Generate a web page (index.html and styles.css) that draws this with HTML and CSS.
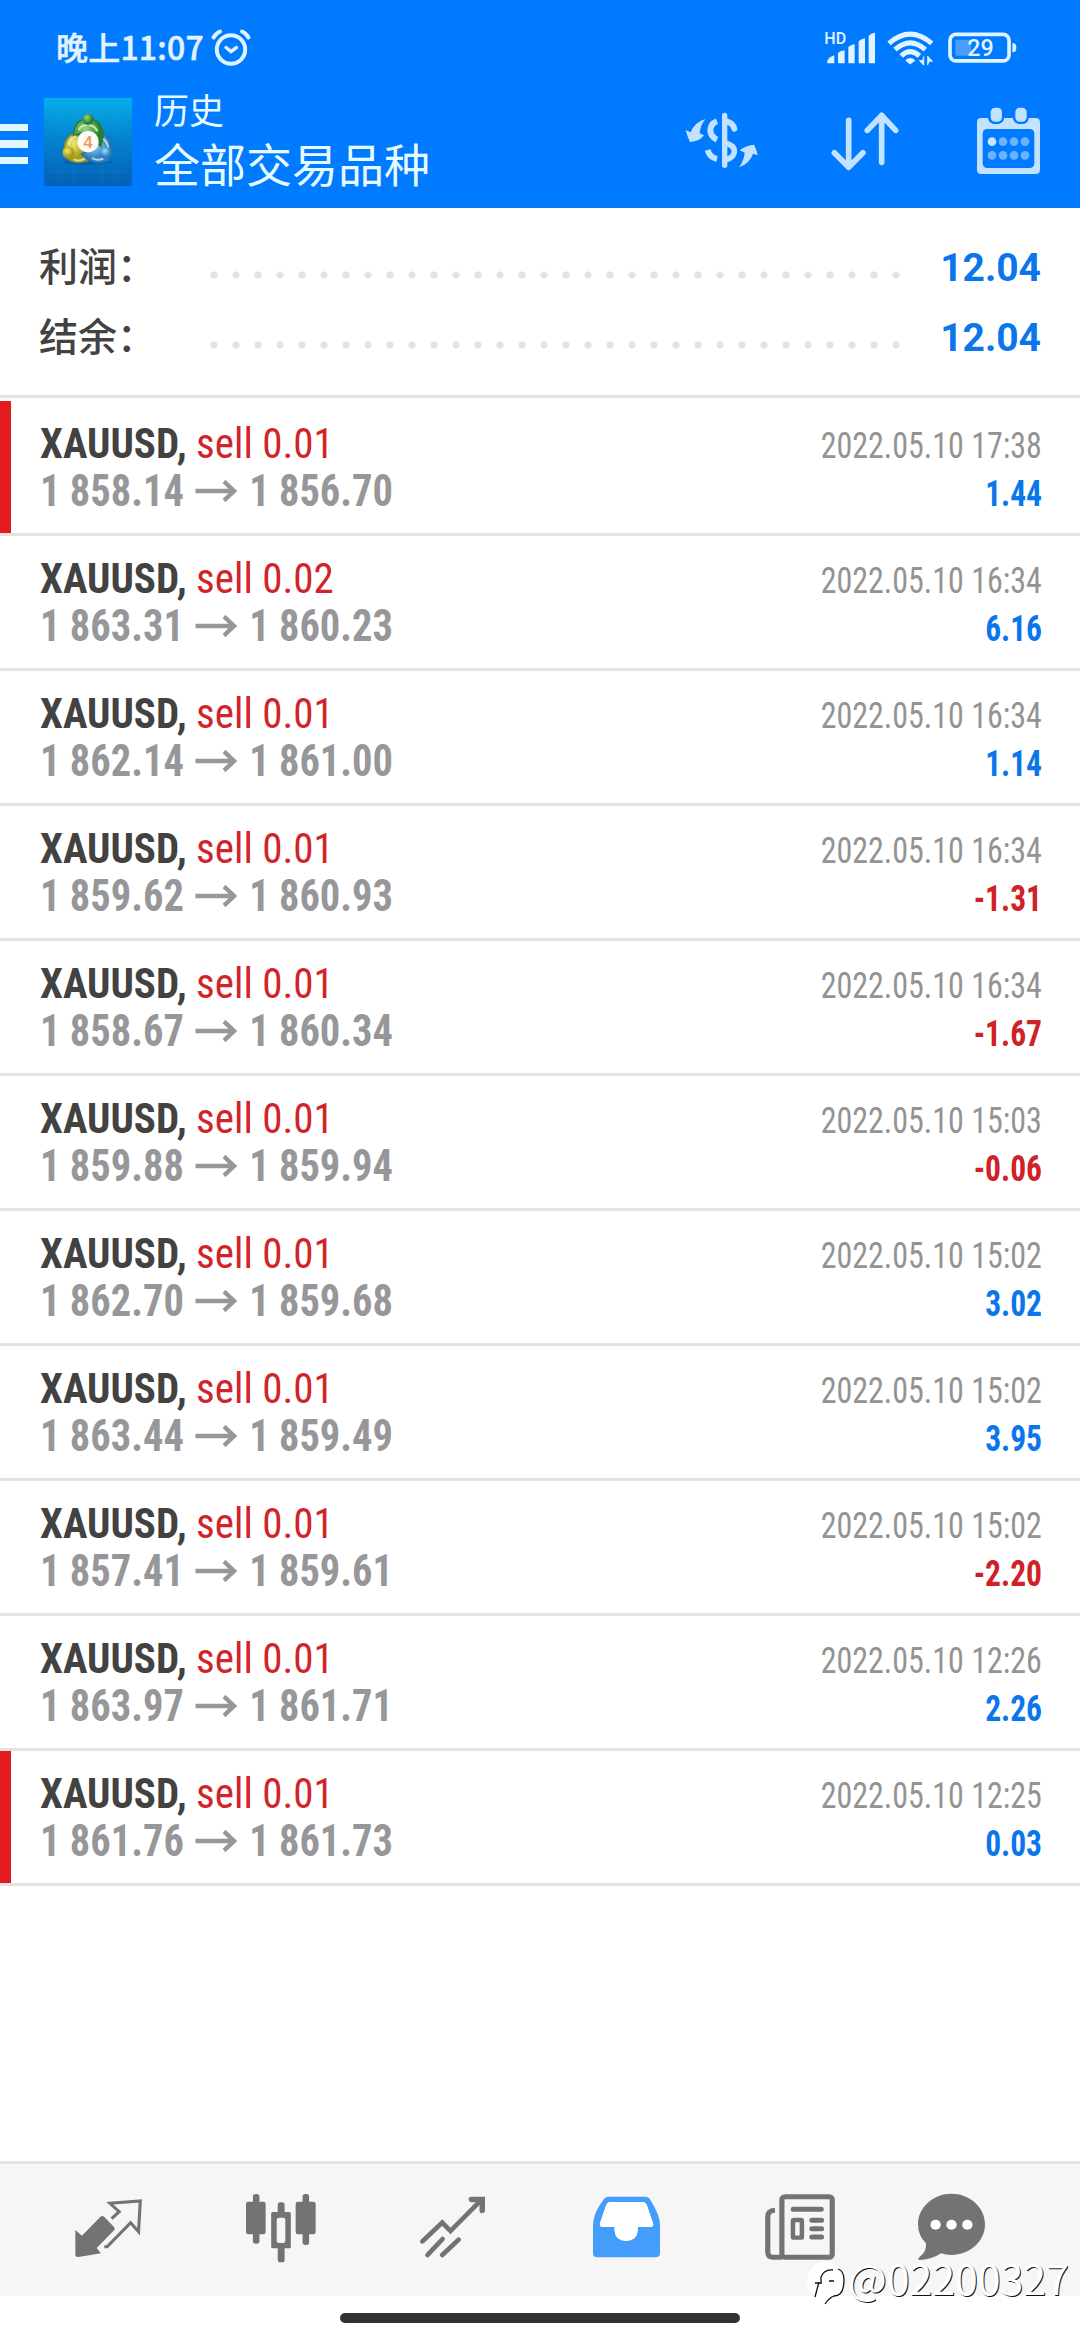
FILE: index.html
```html
<!DOCTYPE html>
<html lang="zh-CN">
<head>
<meta charset="utf-8">
<title>历史</title>
<link rel="stylesheet" href="styles.css">
</head>
<body>
<div class="screen">
  <header class="top">
    <div class="status">
      <div class="status-left">
        <span class="clock">晚上11:07</span>
        <svg class="alarm" viewBox="0 0 40 38"><g fill="none" stroke="#e0f3ff" stroke-linecap="round"><circle cx="20" cy="20.5" r="14.2" stroke-width="4"/><path d="M2.5 8.5Q4.500 4.500 9 2.500M37.500 8.500Q35.500 4.500 31 2.500" stroke-width="4"/><path d="M15 18.500L20 22.500L25.500 18.500" stroke-width="3.500"/></g></svg>
      </div>
      <div class="status-right">
        <svg class="signal" viewBox="555 85 150 114"><text x="553" y="129" class="hd">HD</text><g fill="#e0f3ff"><path d="M562 188V182Q564 170 583 164V188Z"/><path d="M594 188V157Q602 149 614 149V188Z"/><path d="M625 188V139Q633 132 644 131V188Z"/><path d="M656 188V122Q664 114 675 113V188Z"/><path d="M686 188V105Q694 98 705 96V188Z"/></g></svg>
        <svg class="wifi" viewBox="742 85 142 114"><g fill="none" stroke="#e0f3ff" stroke-width="15"><path d="M748 128Q812 72 877 128"/><path d="M766 147Q812 106 858 147"/><path d="M785 166Q812 140 840 166"/></g><path d="M797 180Q812 165 828 180L812 192Z" fill="#e0f3ff"/><path d="M853 167V194L840 180H848M865 194V167L879 182H871" fill="#e0f3ff" stroke="#e0f3ff" stroke-width="3"/></svg>
        <svg class="battery" viewBox="925 85 208 114"><rect x="931" y="101" width="178" height="80" rx="18" fill="none" stroke="#e0f3ff" stroke-width="11"/><rect x="947" y="117" width="48" height="48" rx="6" fill="#4a9dfa"/><path d="M1119 128Q1131 126 1131 141T1119 155Z" fill="#e0f3ff"/><text x="1023" y="166" text-anchor="middle" class="pct">29</text></svg>
      </div>
    </div>
    <div class="appbar">
      <div class="menu"><i></i><i></i><i></i></div>
      <svg class="logo" viewBox="0 0 264 264">
        <defs>
          <linearGradient id="bg" x1="0" y1="0" x2="0" y2="1"><stop offset="0" stop-color="#06aee8"/><stop offset=".5" stop-color="#047fcd"/><stop offset="1" stop-color="#0361b5"/></linearGradient>
          <radialGradient id="gr" cx=".4" cy=".35"><stop offset="0" stop-color="#9bd68a"/><stop offset="1" stop-color="#257f2c"/></radialGradient>
          <radialGradient id="ye" cx=".4" cy=".35"><stop offset="0" stop-color="#f5e96a"/><stop offset="1" stop-color="#a59a1b"/></radialGradient>
          <radialGradient id="bl" cx=".4" cy=".35"><stop offset="0" stop-color="#a9dcfb"/><stop offset="1" stop-color="#2a80c6"/></radialGradient>
        </defs>
        <rect width="264" height="264" fill="url(#bg)"/>
        <path d="M10 45H254M10 88H254M10 132H254M10 176H254M10 220H254M44 10V254M88 10V254M132 10V254M176 10V254M220 10V254" stroke="#38a6e2" stroke-opacity=".22" stroke-width="2"/>
        <ellipse cx="132" cy="192" rx="74" ry="9" fill="#04488c" opacity=".35"/>
        <path d="M60 165Q58 112 100 104L120 160L132 188Q78 206 60 165Z" fill="url(#ye)" stroke="#8d8a20" stroke-width="4"/>
        <path d="M204 165Q206 112 164 104L148 154L112 168Q150 208 194 188Z" fill="url(#bl)" stroke="#276ea8" stroke-width="4"/>
        <path d="M88 116Q86 66 132 62Q178 66 178 120L170 146L132 104L108 106Z" fill="url(#gr)" stroke="#2d7a30" stroke-width="4"/>
        <path d="M104 96Q110 82 132 80Q154 84 160 100" fill="none" stroke="#c2e6a6" stroke-width="7"/>
        <path d="M74 142Q78 120 96 114M88 184Q108 192 122 182M178 122Q192 134 192 150M144 180Q160 190 178 182" fill="none" stroke="#e6f5d8" stroke-opacity=".75" stroke-width="6"/>
        <circle cx="132" cy="64" r="17" fill="url(#gr)"/><circle cx="73" cy="164" r="18" fill="url(#ye)"/><circle cx="186" cy="164" r="17" fill="url(#bl)"/>
        <circle cx="132" cy="131" r="32" fill="#fbfaf6"/>
        <text x="132" y="149" text-anchor="middle" class="four">4</text>
      </svg>
      <div class="titles"><div class="sub">历史</div><div class="main">全部交易品种</div></div>
      <div class="actions">
        <svg class="a1" viewBox="132 315 219 216"><g fill="none" stroke="#c3e2ff" stroke-width="18"><path d="M254 346V496" stroke-linecap="round" stroke-width="16"/><path d="M231 364Q211 372 211 391T231 419"/><path d="M203 450Q209 472 231 477"/><path d="M262 365Q278 369 283 386" stroke-linecap="round"/><path d="M258 430Q284 437 283 455T258 479" stroke-width="17"/></g><path d="M137 391L152 397Q163 367 196 357Q180 378 179 400L192 406Q180 424 150 426Q142 410 137 391ZM353 466L339 461Q330 490 297 502Q312 482 314 458L299 451Q314 438 342 434Q350 448 353 466Z" fill="#c3e2ff"/></svg>
        <svg class="a2" viewBox="570 315 216 216"><g fill="none" stroke="#c3e2ff" stroke-width="17" stroke-linecap="round" stroke-linejoin="round"><path d="M626 361V502M583 458L626 502L669 458M725 487V346M682 391L725 346L767 391"/></g></svg>
        <svg class="a3" viewBox="1005 315 201 216"><path fill="#c3e2ff" fill-rule="evenodd" d="M1023 354H1044Q1046 372 1068 372T1092 354H1119Q1121 372 1143 372T1166 354H1187Q1200 354 1200 367V509Q1200 522 1187 522H1024Q1011 522 1011 509V367Q1011 354 1023 354ZM1043 387Q1028 387 1028 402V489Q1028 504 1043 504H1168Q1183 504 1183 489V402Q1183 387 1168 387Z"/><g fill="#c3e2ff" stroke="#007aff" stroke-width="6"><rect x="1049" y="320" width="40" height="48" rx="16"/><rect x="1123" y="320" width="40" height="48" rx="16"/></g><g fill="#6bb3ff"><circle cx="1056" cy="425" r="13" fill="#c3e8ff"/><circle cx="1089" cy="425" r="13"/><circle cx="1122" cy="425" r="13"/><circle cx="1155" cy="425" r="13"/><circle cx="1056" cy="466" r="13"/><circle cx="1089" cy="466" r="13"/><circle cx="1122" cy="466" r="13"/><circle cx="1155" cy="466" r="13"/></g></svg>
      </div>
    </div>
  </header>

  <section class="summary">
    <div class="sum-row"><span class="label">利润：</span><span class="dots"></span><b>12.04</b></div>
    <div class="sum-row"><span class="label">结余：</span><span class="dots"></span><b>12.04</b></div>
  </section>

  <main class="deals" id="deals"></main>

  <nav class="tabs">
    <svg viewBox="218 90 194 270" preserveAspectRatio="none"><path d="M219 240L238 257L291 201Q297 195 303 201L331 231Q336 236 331 241L281 294L293 310L228 321Q219 322 219 313Z" fill="#737373"/><path d="M324 206L346 185L319 160L407 153L402 245L379 218L311 290H303" fill="none" stroke="#737373" stroke-width="9"/></svg>
    <svg viewBox="715 90 203 270" preserveAspectRatio="none"><g fill="#737373"><rect x="735" y="132" width="19" height="149" rx="8"/><rect x="715" y="155" width="57" height="98" rx="7"/><rect x="879" y="132" width="19" height="153" rx="8"/><rect x="859" y="155" width="58" height="98" rx="7"/><rect x="807" y="157" width="20" height="180" rx="8"/><rect x="788" y="186" width="57" height="109" rx="5"/></g><rect x="804" y="203" width="25" height="76" rx="6" fill="#f6f6f6"/></svg>
    <svg viewBox="1224 90 190 270" preserveAspectRatio="none"><g fill="none" stroke="#737373" stroke-width="14" stroke-linecap="round"><path d="M1231 274L1289 218L1313 243L1402 151" stroke-linejoin="miter"/><path d="M1246 315L1290 267M1289 315L1337 269"/></g><path d="M1373 140H1414V183Q1412 190 1405 190T1398 183V157H1373Q1366 156 1366 148T1373 140Z" fill="#737373"/></svg>
    <svg viewBox="158 90 193 270" preserveAspectRatio="none"><path fill="#449dfb" fill-rule="evenodd" d="M202 140H308Q318 140 323 149Q351 195 351 225V309Q351 322 338 322H171Q158 322 158 309V225Q158 190 188 149Q193 140 202 140ZM209 156Q200 156 196 166L178 220Q176 231 186 231H220V240Q222 272 253 273Q285 272 287 240V231H323Q334 231 331 220L313 166Q309 156 300 156Z"/><path d="M209 156Q200 156 196 166L178 220Q176 231 186 231H220V240Q222 272 253 273Q285 272 287 240V231H323Q334 231 331 220L313 166Q309 156 300 156Z" fill="#fff"/></svg>
    <svg viewBox="656 90 203 270" preserveAspectRatio="none"><g fill="none" stroke="#737373" stroke-width="15"><rect x="705" y="140" width="146" height="182" rx="9"/><path d="M705 322H680Q664 322 664 306V200Q664 182 685 181"/><path d="M738 178H819M792 211H820M792 236H820M792 261H820" stroke-linecap="round"/><rect x="737" y="210" width="26" height="53" rx="3" stroke-width="13"/></g></svg>
    <svg viewBox="1102 90 194 270" preserveAspectRatio="none"><path d="M1199 131C1252 131 1296 172 1296 223S1252 315 1199 315Q1183 315 1169 310Q1140 330 1105 330Q1100 328 1107 320Q1128 305 1125 280Q1102 256 1102 223C1102 172 1146 131 1199 131Z" fill="#737373"/><g fill="#fff"><circle cx="1153" cy="224" r="15"/><circle cx="1199" cy="224" r="15"/><circle cx="1245" cy="224" r="15"/></g></svg>
  </nav>
  <footer class="gesture"><i></i></footer>

  <div class="watermark">
    <svg viewBox="0 0 38 44"><circle cx="19" cy="19" r="19" fill="#fff"/><path d="M8 35L12 20M8 21H15M22 19H27M14 20V15Q17 7 26 8M31 7Q37 9 37 18Q37 34 27 34Q22 36 18 42" fill="none" stroke="#111" stroke-width="1.300"/></svg>
    <span>@02200327</span>
  </div>
</div>
<script src="deals.js"></script>
</body>
</html>
```
FILE: styles.css
```css
* { box-sizing: border-box; }
body { margin: 0; background: #fff; }
.screen {
  position: relative;
  width: 1080px;
  height: 2340px;
  overflow: hidden;
  display: flex;
  flex-direction: column;
  font-family: Roboto, "Noto Sans CJK SC", sans-serif;
  color: #424242;
}
svg { display: block; overflow: visible; flex: none; }

.top { height: 208px; background: #007aff; border-bottom: 1px solid #1470dc; flex: none; }
.status { height: 95px; display: flex; justify-content: space-between; align-items: center; padding: 0 63px 0 56px; }
.status-left { display: flex; align-items: center; gap: 7px; }
.clock { font: 500 32px/40px "Noto Sans CJK SC", sans-serif; letter-spacing: .2px; margin-top: -3px; color: #e0f3ff; white-space: nowrap; -webkit-text-stroke: .5px #e0f3ff; }
.alarm { width: 40px; height: 38px; }
.status-right { display: flex; align-items: center; }
.status-right svg { height: 38px; }
.signal { width: 50px; margin-right: 12px; }
.wifi { width: 47px; margin-right: 14px; }
.battery { width: 69px; }
.hd { font: 500 48px Roboto, sans-serif; fill: #e0f3ff; }
.pct { font: 500 70px Roboto, sans-serif; fill: #e0f3ff; }

.appbar { height: 94px; display: flex; align-items: center; padding-right: 38px; }
.menu { width: 28px; display: flex; flex-direction: column; gap: 9px; margin: 4px 16px 0 0; }
.menu i { height: 7.500px; background: #e2f7ff; }
.logo { width: 88px; height: 88px; }
.four { font: 500 52px Roboto, sans-serif; fill: #ec9a55; }
.titles { margin: -4px 0 0 22px; color: #e6fbff; font-family: "Noto Sans CJK SC", sans-serif; white-space: nowrap; }
.sub { font-size: 35px; line-height: 44px; }
.main { font-size: 46px; line-height: 62px; }
.actions { margin: -2px 0 0 auto; display: flex; gap: 73px; }
.actions svg { height: 72px; }
.a1 { width: 73px; }
.a2 { width: 72px; }
.a3 { width: 67px; }

.summary { height: 190px; padding: 23px 39px 0 39px; border-bottom: 3px solid #e3e3e3; flex: none; }
.sum-row { height: 70px; display: flex; align-items: center; }
.label { width: 170px; margin-top: -5px; font: 500 39px/70px "Noto Sans CJK SC", sans-serif; white-space: nowrap; }
.dots { width: 704px; height: 8px; margin: 17px 0 0 -6px; background: radial-gradient(circle, #e2e2e2 3.200px, transparent 4px) 0 0 / 22px 8px repeat-x; }
.sum-row b { margin: 3px 0 0 auto; font-size: 39px; font-weight: 700; color: #0b76ec; }

.deals { padding-top: 3px; flex: 1; }
.deal { height: 135px; padding: 18px 38px 0 40px; border-bottom: 3px solid #e3e3e3; font-family: "Roboto Condensed", Roboto, sans-serif; font-stretch: condensed; }
.deal.marked { background: linear-gradient(#e21c1e, #e21c1e) 0 0 / 11px 132px no-repeat; }
.line { height: 48px; display: flex; justify-content: space-between; align-items: baseline; font-size: 43px; line-height: 48px; white-space: nowrap; }
.title { transform: scaleX(.953); transform-origin: left; }
.symbol { font-weight: 700; }
.side { color: #d0242a; }
.date { font-size: 36px; color: #939393; transform: scaleX(.889); transform-origin: right; }
.prices { display: flex; align-items: baseline; font-weight: 700; font-size: 44px; color: #97979a; transform: scaleX(.92); transform-origin: left; }
.prices svg { width: 45px; height: 22px; margin: 0 13px; align-self: center; }
.profit { font-size: 36px; font-weight: 700; color: #0b76ec; transform: scaleX(.875); transform-origin: right; }
.profit.neg { color: #cf2126; }

.tabs { height: 135px; background: #f6f6f6; border-top: 3px solid #e2e2e2; display: flex; padding: 16px 0 0 75px; flex: none; }
.tabs svg { height: 90px; width: 67px; margin-right: 104px; }
.tabs svg:nth-child(2) { width: 70px; }
.tabs svg:nth-child(3) { width: 65px; margin-right: 108px; }
.tabs svg:nth-child(4) { width: 67px; margin-right: 105px; }
.tabs svg:nth-child(5) { width: 70px; margin-right: 83px; }
.tabs svg:nth-child(6) { margin-right: 0; }
.gesture { height: 44px; padding-top: 17px; flex: none; }
.gesture i { display: block; width: 400px; height: 10px; border-radius: 5px; background: #323232; margin: 0 auto; }

.watermark { position: absolute; left: 807px; top: 2262px; display: flex; gap: 3px; }
.watermark svg { width: 38px; height: 44px; }
.watermark span { margin-top: -7px; font: 400 41px/44px "Noto Sans CJK SC", sans-serif; color: #fff; text-shadow: 1px 1px 0 #111; }
```
FILE: deals.js
```js
const deals = [
  ["0.01", "1 858.14", "1 856.70", "17:38", "1.44", true],
  ["0.02", "1 863.31", "1 860.23", "16:34", "6.16"],
  ["0.01", "1 862.14", "1 861.00", "16:34", "1.14"],
  ["0.01", "1 859.62", "1 860.93", "16:34", "-1.31"],
  ["0.01", "1 858.67", "1 860.34", "16:34", "-1.67"],
  ["0.01", "1 859.88", "1 859.94", "15:03", "-0.06"],
  ["0.01", "1 862.70", "1 859.68", "15:02", "3.02"],
  ["0.01", "1 863.44", "1 859.49", "15:02", "3.95"],
  ["0.01", "1 857.41", "1 859.61", "15:02", "-2.20"],
  ["0.01", "1 863.97", "1 861.71", "12:26", "2.26"],
  ["0.01", "1 861.76", "1 861.73", "12:25", "0.03", true],
];
const arrow = '<svg viewBox="0 0 45 22"><path d="M0 11H42M31 1.500L42 11L31 20.500" fill="none" stroke="#97979a" stroke-width="4.500"/></svg>';
document.getElementById("deals").innerHTML = deals.map(([lot, open, close, time, profit, marked]) => `
  <article class="deal${marked ? " marked" : ""}">
    <div class="line"><span class="title"><span class="symbol">XAUUSD,</span> <span class="side">sell ${lot}</span></span><span class="date">2022.05.10 ${time}</span></div>
    <div class="line"><span class="prices"><span>${open}</span>${arrow}<span>${close}</span></span><span class="profit${profit[0] === "-" ? " neg" : ""}">${profit}</span></div>
  </article>`).join("");
```
